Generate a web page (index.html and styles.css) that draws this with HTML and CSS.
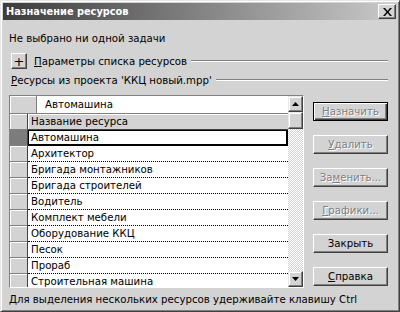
FILE: index.html
```html
<!doctype html>
<html>

<head>
  <title>Назначение ресурсов</title>
  <meta http-equiv="Content-Type" content="text/html; charset=UTF-8">
  <link rel="stylesheet" href="styles.css">
</head>

<body>
  <div class="window">
    <div class="titlebar">
      <span class="title">Назначение ресурсов</span>
      <span class="close">
        <svg width="9" height="8" viewBox="0 0 9 8"><path d="M0 0h2l2.5 3 2.5-3h2l-3.5 4 3.5 4h-2l-2.5-3-2.5 3h-2l3.5-4z" fill="#000"/></svg>
      </span>
    </div>
    <div class="content">
      <div class="line status">Не выбрано ни одной задачи</div>
      <div class="line group first">
        <span class="plus">+</span>
        <span class="label"><u>П</u>араметры списка ресурсов</span>
        <span class="rule"></span>
      </div>
      <div class="line group second">
        <span class="label"><u>Р</u>есурсы из проекта 'ККЦ новый.mpp'</span>
        <span class="rule"></span>
      </div>
      <div class="main">
        <div class="table">
          <div class="tcol">
            <div class="editrow">
              <span class="corner"></span>
              <span class="edit">Автомашина</span>
            </div>
            <div class="row head">
              <span class="rh"></span>
              <span class="colhead">Название ресурса</span>
            </div>
            <div class="row sel">
              <span class="rh"></span>
              <span class="cell">Автомашина</span>
            </div>
            <div class="row"><span class="rh"></span><span class="cell">Архитектор</span></div>
            <div class="row"><span class="rh"></span><span class="cell">Бригада монтажников</span></div>
            <div class="row"><span class="rh"></span><span class="cell">Бригада строителей</span></div>
            <div class="row"><span class="rh"></span><span class="cell">Водитель</span></div>
            <div class="row"><span class="rh"></span><span class="cell">Комплект мебели</span></div>
            <div class="row"><span class="rh"></span><span class="cell">Оборудование ККЦ</span></div>
            <div class="row"><span class="rh"></span><span class="cell">Песок</span></div>
            <div class="row"><span class="rh"></span><span class="cell">Прораб</span></div>
            <div class="row"><span class="rh"></span><span class="cell">Строительная машина</span></div>
          </div>
          <div class="scroll">
            <span class="sbtn"><svg width="7" height="4" viewBox="0 0 7 4"><path d="M3.5 0L7 4H0z" fill="#000"/></svg></span>
            <span class="sbox"></span>
            <span class="track"></span>
            <span class="sbtn"><svg width="7" height="4" viewBox="0 0 7 4"><path d="M0 0h7L3.5 4z" fill="#000"/></svg></span>
          </div>
        </div>
        <div class="buttons">
          <span class="btn default disabled"><u>Н</u>азначить</span>
          <span class="btn disabled"><u>У</u>далить</span>
          <span class="btn disabled">За<u>м</u>енить...</span>
          <span class="btn disabled"><u>Г</u>рафики...</span>
          <span class="btn">Закрыть</span>
          <span class="btn"><u>С</u>правка</span>
        </div>
      </div>
      <div class="line hint">Для выделения нескольких ресурсов удерживайте клавишу Ctrl</div>
    </div>
  </div>
</body>

</html>
```

FILE: styles.css
```css
html,
body {
  margin: 0;
  background-color: #d3d3d3;
  font-family: 'DejaVu Sans', sans-serif;
  font-size: 10.2px;
  color: #000;
}

.window {
  width: 400px;
  height: 312px;
  box-sizing: border-box;
  border: 1px solid;
  border-color: #e6e6e6 #404040 #404040 #e6e6e6;
  box-shadow: inset 1px 1px #fff, inset -1px -1px #808080;
  padding: 2px;
  display: flex;
  flex-direction: column;
}

.titlebar {
  height: 18px;
  background: linear-gradient(to right, #3c3c3c, #cacaca);
  display: flex;
  align-items: center;
  justify-content: space-between;
  padding: 0 0 0 3px;
}

.title {
  color: #fff;
  font-weight: bold;
  font-size: 9.8px;
}

.close {
  width: 18px;
  height: 15px;
  margin-right: 1px;
  box-sizing: border-box;
  background: #d3d3d3;
  border: 1px solid;
  border-color: #fff #404040 #404040 #fff;
  box-shadow: inset -1px -1px #808080;
  display: flex;
  align-items: center;
  justify-content: center;
}

.content {
  flex: 1;
  padding: 0 6px 0 6px;
  display: flex;
  flex-direction: column;
}

.line {
  display: flex;
  align-items: center;
  white-space: nowrap;
}

.status {
  height: 18px;
  margin-top: 9px;
}

.group.first {
  margin-top: 5px;
  height: 18px;
}

.group.second {
  height: 20px;
}

.plus {
  width: 16px;
  height: 16px;
  box-sizing: border-box;
  border: 1px solid;
  border-color: #fff #404040 #404040 #fff;
  box-shadow: inset -1px -1px #808080;
  display: flex;
  align-items: center;
  justify-content: center;
  font-size: 13px;
  margin: 0 5px 0 2px;
}

.label {
  padding-left: 2px;
}

.rule {
  flex: 1;
  height: 0;
  border-top: 1px solid #808080;
  border-bottom: 1px solid #fff;
  margin: 0 3px 0 4px;
}

.main {
  display: flex;
  margin-top: 5px;
  height: 193px;
}

.table {
  width: 295px;
  box-sizing: border-box;
  border: 1px solid;
  border-color: #808080 #fff #fff #808080;
  display: flex;
  overflow: hidden;
}

.tcol {
  flex: 1;
  display: flex;
  flex-direction: column;
  overflow: hidden;
}

.editrow {
  display: flex;
  height: 17px;
  flex: none;
  border-bottom: 1px solid #808080;
}

.corner {
  width: 27px;
  box-sizing: border-box;
  border-right: 1px solid #808080;
  box-shadow: inset 1px 1px #fff;
}

.edit {
  flex: 1;
  background: #fff;
  padding-left: 8px;
  line-height: 17px;
}

.row {
  display: flex;
  height: 16px;
  flex: none;
}

.rh {
  width: 18px;
  flex: none;
  box-sizing: border-box;
  border-right: 1px solid #404040;
  border-bottom: 1px solid #808080;
  box-shadow: inset 1px 1px #fff;
}

.colhead {
  flex: 1;
  box-sizing: border-box;
  border-bottom: 1px solid #404040;
  box-shadow: inset 1px 1px #fff;
  padding-left: 3px;
  line-height: 15px;
}

.cell {
  flex: 1;
  background: #fff;
  box-sizing: border-box;
  border-bottom: 1px dotted #000;
  padding-left: 3px;
  line-height: 15px;
}

.sel .rh {
  background: #7c7c7c;
  box-shadow: none;
}

.sel .cell {
  border: 1px solid #000;
  border-width: 1px 2px 2px 1px;
  padding-left: 2px;
  line-height: 13px;
}

.scroll {
  width: 15px;
  display: flex;
  flex-direction: column;
}

.sbtn,
.sbox {
  height: 16px;
  flex: none;
  box-sizing: border-box;
  border: 1px solid;
  border-color: #e8e8e8 #404040 #404040 #e8e8e8;
  box-shadow: inset -1px -1px #808080, inset 1px 1px #fff;
  background: #d3d3d3;
  display: flex;
  align-items: center;
  justify-content: center;
}

.sbox {
  height: 17px;
}

.track {
  flex: 1;
  background: repeating-conic-gradient(#fff 0 25%, #d3d3d3 0 50%) 0 0 / 2px 2px;
}

.buttons {
  flex: 1;
  display: flex;
  flex-direction: column;
  align-items: flex-start;
  padding: 7px 0 0 9px;
  gap: 14px;
}

.btn {
  width: 75px;
  height: 19px;
  box-sizing: border-box;
  border: 1px solid;
  border-color: #fff #404040 #404040 #fff;
  box-shadow: inset -1px -1px #808080;
  display: flex;
  align-items: center;
  justify-content: center;
}

.btn.default {
  border: 1px solid #000;
  box-shadow: inset 1px 1px #fff, inset -1px -1px #404040, inset -2px -2px #808080;
}

.btn.disabled {
  color: #808080;
  text-shadow: 1px 1px #fff;
}

.hint {
  height: 20px;
  margin-top: 1px;
}
```
